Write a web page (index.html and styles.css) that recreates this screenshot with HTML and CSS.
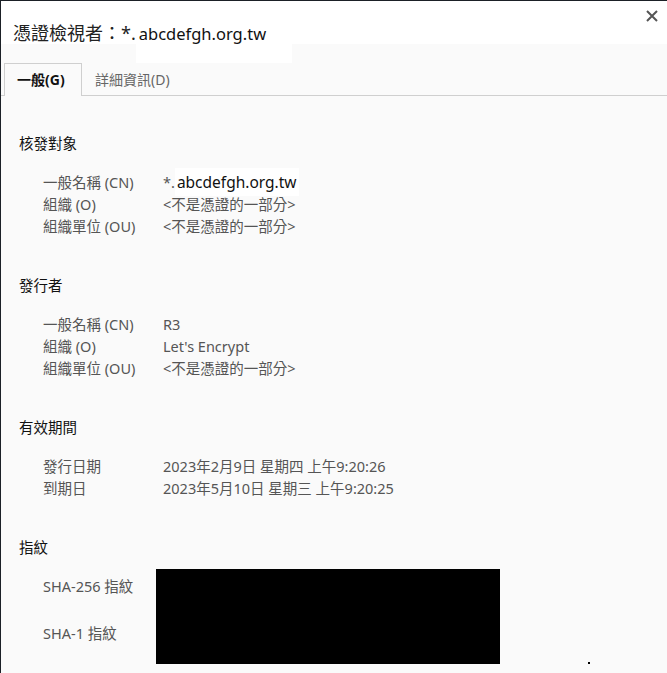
FILE: index.html
```html
<!doctype html>
<html lang="zh-Hant">
<head>
	<meta charset="UTF-8">
	<title>憑證檢視者</title>
	<link rel="stylesheet" href="styles.css">
</head>
<body>
	<div class="win">
		<div class="head">
			<span class="title">憑證檢視者：*.<span class="mask">abcdefgh.org.tw</span></span>
			<svg class="close" width="12" height="12" viewBox="0 0 12 12">
				<path d="M1 1 L11 11 M11 1 L1 11" stroke="#555" stroke-width="2" fill="none"/>
			</svg>
		</div>
		<div class="tabs">
			<span class="tab on">一般(G)</span>
			<span class="tab">詳細資訊(D)</span>
		</div>
		<div class="cont">
			<div class="sec">
				<div class="sec-t">核發對象</div>
				<div class="rows">
					<span class="k">一般名稱 (CN)</span><span class="v">*.<span class="mask2">abcdefgh.org.tw</span></span>
					<span class="k">組織 (O)</span><span class="v">&lt;不是憑證的一部分&gt;</span>
					<span class="k">組織單位 (OU)</span><span class="v">&lt;不是憑證的一部分&gt;</span>
				</div>
			</div>
			<div class="sec">
				<div class="sec-t">發行者</div>
				<div class="rows">
					<span class="k">一般名稱 (CN)</span><span class="v">R3</span>
					<span class="k">組織 (O)</span><span class="v">Let's Encrypt</span>
					<span class="k">組織單位 (OU)</span><span class="v">&lt;不是憑證的一部分&gt;</span>
				</div>
			</div>
			<div class="sec">
				<div class="sec-t">有效期間</div>
				<div class="rows">
					<span class="k">發行日期</span><span class="v">2023年2月9日 星期四 上午9:20:26</span>
					<span class="k">到期日</span><span class="v">2023年5月10日 星期三 上午9:20:25</span>
				</div>
			</div>
			<div class="sec last">
				<div class="sec-t">指紋</div>
				<div class="fp">
					<span class="k k1">SHA-256 指紋</span>
					<span class="k k2">SHA-1 指紋</span>
					<span class="black"></span>
				</div>
			</div>
			<span class="dot"></span>
		</div>
	</div>
</body>
</html>
```

FILE: styles.css
```css
body,html{
	margin: 0;
	width: 100%;
	height: 100%;
}
*{
	font-family: "Noto Sans", "Noto Sans CJK TC", sans-serif;
}
.win{
	width: 666px;
	height: 672px;
	border-top: 1px solid #1b2026;
	border-left: 1px solid #1b2026;
	background: #fafafa;
	overflow: hidden;
	position: relative;
}
.head{
	height: 43px;
	background: #fff;
	display: flex;
	justify-content: space-between;
	align-items: flex-start;
}
.title{
	font-size: 18px;
	line-height: 24px;
	color: #222;
	padding: 20px 0 0 12px;
}
.mask{
	background: #fff;
	padding: 2px 26px 18px 3px;
	color: #111;
	font-size: 16.5px;
}
.close{
	margin: 9px 9px 0 0;
}
.tabs{
	display: flex;
	padding: 19px 0 0 3px;
	border-bottom: 1px solid #cfcfcf;
}
.tab{
	font-size: 14px;
	height: 31px;
	line-height: 31px;
	padding: 0 12px;
	color: #666;
	border: 1px solid transparent;
	border-bottom: 0;
}
.tab.on{
	color: #111;
	font-weight: bold;
	border-color: #cfcfcf;
	background: #fafafa;
	margin-bottom: -1px;
	height: 32px;
	width: 52px;
}
.cont{
	padding: 36px 0 0 18px;
}
.sec{
	margin-bottom: 37px;
}
.sec-t{
	font-size: 14.5px;
	line-height: 22px;
	color: #111;
	margin-bottom: 17px;
}
.rows{
	display: grid;
	grid-template-columns: 120px auto;
	padding-left: 24px;
	font-size: 14.5px;
	line-height: 22px;
	color: #555;
}
.mask2{
	background: #fff;
	color: #111;
	font-size: 15.5px;
	padding: 3px 2px 3px 2px;
}
.fp{
	display: grid;
	grid-template-columns: 113px 344px;
	grid-template-rows: 32px 63px;
	padding-left: 24px;
	margin-top: -6px;
	font-size: 14.5px;
	color: #555;
}
.k1{
	grid-row: 1;
	grid-column: 1;
	align-self: center;
}
.k2{
	grid-row: 2;
	grid-column: 1;
	align-self: center;
}
.black{
	grid-row: 1 / span 2;
	grid-column: 2;
	background: #000;
}
.dot{
	position: absolute;
	left: 587px;
	top: 661px;
	width: 2px;
	height: 2px;
	background: #000;
}
```
